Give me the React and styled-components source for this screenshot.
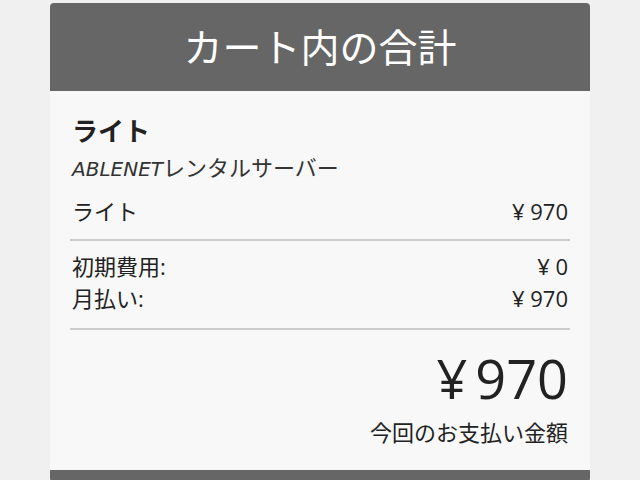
import styled, { createGlobalStyle } from "styled-components";

const GlobalStyle = createGlobalStyle`
  html, body {
    margin: 0;
    padding: 0;
    background: #f0f0f0;
    overflow: hidden;
  }
  body {
    font-family: "Open Sans", "Noto Sans CJK JP", sans-serif;
    color: #222;
  }
`;

const Card = styled.section`
  width: 540px;
  margin: 3px auto 0;
  border-radius: 4px;
  overflow: hidden;
  background: #f8f8f8;
  border-bottom: 12px solid #666;
`;

const Header = styled.h1`
  margin: 0;
  height: 88px;
  padding-bottom: 5px;
  box-sizing: border-box;
  display: flex;
  align-items: center;
  justify-content: center;
  background: #666;
  color: #fff;
  font-family: "Noto Sans CJK JP", sans-serif;
  font-size: 39px;
  font-weight: 400;
`;

const Body = styled.div`
  padding: 22px 20px 23px;
  display: flex;
  flex-direction: column;
`;

const PlanName = styled.div`
  padding-left: 2px;
  font-size: 26px;
  font-weight: 700;
  line-height: 36px;
`;

const Sub = styled.div`
  padding-left: 2px;
  margin-top: 3px;
  font-size: 22px;
  line-height: 30px;
  color: #333;

  em {
    font-family: "DejaVu Sans", sans-serif;
    font-size: 20px;
    font-style: italic;
  }
`;

const Row = styled.div`
  display: flex;
  justify-content: space-between;
  padding: 0 2px;
  margin-top: ${({ $gap }) => $gap || 0}px;
  font-size: 22px;
  line-height: ${({ $lh }) => $lh || 30}px;
`;

const Amount = styled.span`
  font-family: "Open Sans", sans-serif;
  font-size: 22px;
`;

const Divider = styled.hr`
  margin: ${({ $top }) => $top}px 0 0;
  border: 0;
  height: 2px;
  background: #ccc;
`;

const Total = styled.div`
  margin-top: 18px;
  text-align: right;
  font-family: "Open Sans", sans-serif;
  font-size: 54px;
  line-height: 60px;
  padding-right: 2px;

  span {
    margin-right: 8px;
  }
`;

const TotalLabel = styled.div`
  margin-top: 9px;
  text-align: right;
  font-size: 22px;
  line-height: 30px;
  padding-right: 2px;
`;

export default function App() {
  return (
    <>
      <GlobalStyle />
      <Card>
        <Header>カート内の合計</Header>
        <Body>
          <PlanName>ライト</PlanName>
          <Sub>
            <em>ABLENET</em>レンタルサーバー
          </Sub>
          <Row $gap={12}>
            <span>ライト</span>
            <Amount>¥ 970</Amount>
          </Row>
          <Divider $top={13} />
          <Row $gap={9} $lh={32}>
            <span>初期費用:</span>
            <Amount>¥ 0</Amount>
          </Row>
          <Row $lh={32}>
            <span>月払い:</span>
            <Amount>¥ 970</Amount>
          </Row>
          <Divider $top={14} />
          <Total>
            <span>¥</span>970
          </Total>
          <TotalLabel>今回のお支払い金額</TotalLabel>
        </Body>
      </Card>
    </>
  );
}
